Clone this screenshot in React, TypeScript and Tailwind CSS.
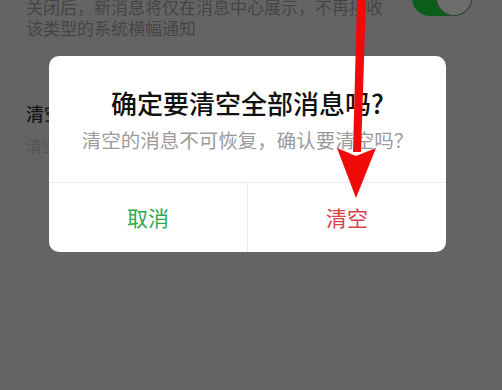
import { FC } from "react";

const font = { fontFamily: '"Noto Sans CJK SC", "Noto Sans", sans-serif' };

const Arrow: FC = () => (
  <svg
    className="absolute left-0 top-0"
    width="502"
    height="390"
    viewBox="0 0 502 390"
    fill="none"
  >
    <path d="M357 0 L366 0 L361 152 L353 152 Z" fill="#f00a0a" />
    <path d="M337 148 L356 156 L376 148 L356 198 Z" fill="#f00a0a" />
  </svg>
);

const App: FC = () => {
  return (
    <div
      className="relative h-[390px] w-[502px] overflow-hidden bg-[#656465]"
      style={font}
    >
      {/* background settings page, dimmed */}
      <div className="flex flex-col pl-[26px] pr-[110px]">
        <div className="-mt-[4px] text-[17px] leading-[21px] text-[#454544]">
          <p>关闭后，新消息将仅在消息中心展示，不再接收</p>
          <p>该类型的系统横幅通知</p>
        </div>
        <div className="mt-[64px] text-[18px] font-medium leading-[22px] text-[#161616]">
          清空消息
        </div>
        <div className="mt-[11px] text-[16px] leading-[20px] text-[#555]">
          清空全部消息
        </div>
      </div>

      {/* toggle */}
      <div className="absolute left-[412px] top-[-20px] h-[36px] w-[60px] rounded-full bg-[#0a5e17]">
        <div className="absolute right-0 top-0 h-[36px] w-[36px] rounded-full border border-[#3b3b3b] bg-[#6d6d6b]" />
      </div>

      {/* dialog */}
      <div className="absolute left-[49px] top-[56px] flex h-[196px] w-[397px] flex-col rounded-[10px] bg-white">
        <div className="flex h-[126px] flex-col items-center">
          <div className="mt-[29px] text-[26px] font-medium leading-[35px] text-[#111]">
            确定要清空全部消息吗?
          </div>
          <div className="mt-[7px] text-[19.5px] leading-[26px] text-[#9b9b9b]">
            清空的消息不可恢复，确认要清空吗？
          </div>
        </div>
        <div className="flex flex-1 border-t border-[#ececec]">
          <button className="flex flex-1 items-center justify-center text-[21px] text-[#2fa84f]">
            取消
          </button>
          <div className="w-px bg-[#ececec]" />
          <button className="flex flex-1 items-center justify-center text-[21px] text-[#d6434b]">
            清空
          </button>
        </div>
      </div>

      <Arrow />
    </div>
  );
};

export default App;
